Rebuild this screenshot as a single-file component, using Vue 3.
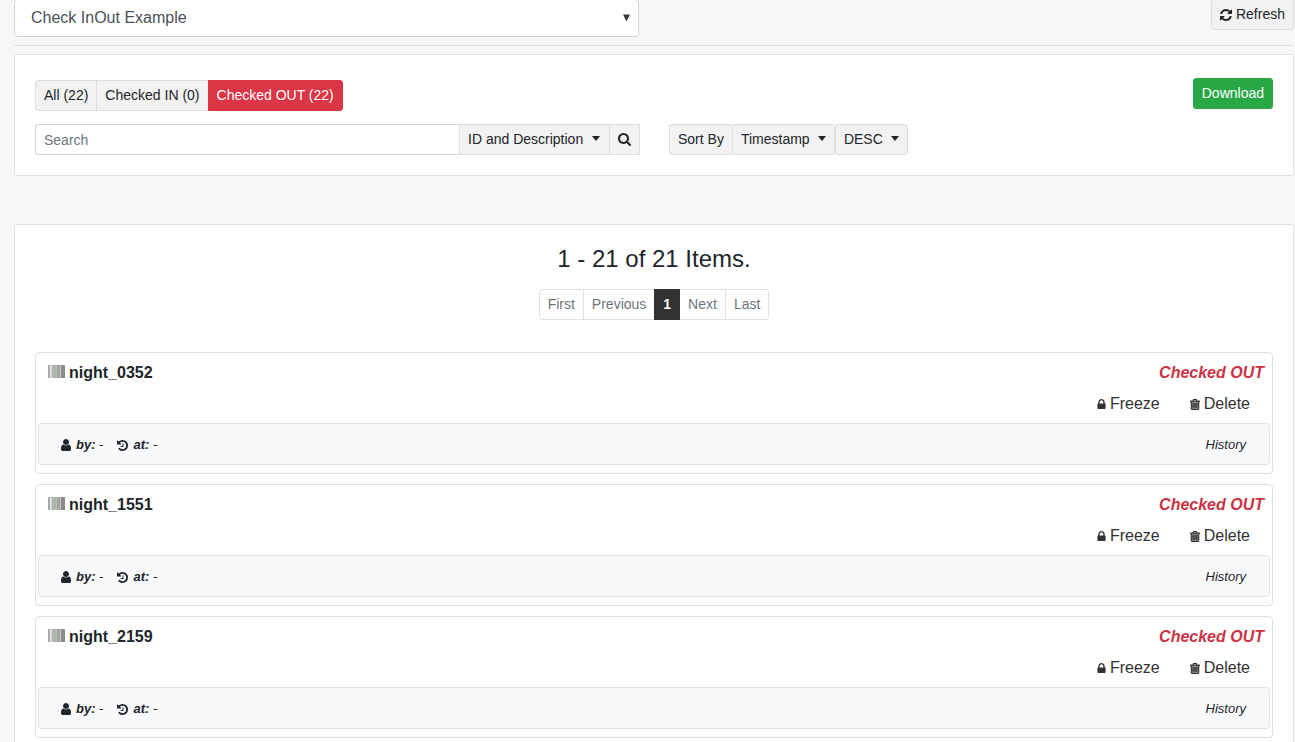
<script setup>
import { ref } from 'vue'

const icons = {
  refresh: {
    box: '128 128 1536 1536',
    d: 'M1639 1056q0 5-1 7-64 268-268 434.5t-478 166.5q-146 0-282.5-55t-243.5-157l-129 129q-19 19-45 19t-45-19-19-45v-448q0-26 19-45t45-19h448q26 0 45 19t19 45-19 45l-137 137q71 66 161 102t187 36q134 0 250-65t186-179q11-17 53-117 8-23 30-23h192q13 0 22.5 9.5t9.5 22.5zm25-800v448q0 26-19 45t-45 19h-448q-26 0-45-19t-19-45 19-45l138-138q-148-137-349-137-134 0-250 65t-186 179q-11 17-53 117-8 23-30 23h-199q-13 0-22.5-9.5t-9.5-22.5v-7q65-268 270-434.5t480-166.5q146 0 284 55.5t245 156.5l130-129q19-19 45-19t45 19 19 45z'
  },
  search: {
    box: '64 128 1664 1664',
    d: 'M1216 832q0-185-131.5-316.5t-316.5-131.5-316.5 131.5-131.5 316.5 131.5 316.5 316.5 131.5 316.5-131.5 131.5-316.5zm512 832q0 52-38 90t-90 38q-54 0-90-38l-343-342q-179 124-399 124-143 0-273.5-55.5t-225-150-150-225-55.5-273.5 55.5-273.5 150-225 225-150 273.5-55.5 273.5 55.5 225 150 150 225 55.5 273.5q0 220-124 399l343 343q37 37 37 90z'
  },
  lock: {
    box: '320 128 1152 1408',
    d: 'M640 768h512v-192q0-106-75-181t-181-75-181 75-75 181v192zm832 96v576q0 40-28 68t-68 28h-960q-40 0-68-28t-28-68v-576q0-40 28-68t68-28h32v-192q0-184 132-316t316-132 316 132 132 316v192h32q40 0 68 28t28 68z'
  },
  trash: {
    box: '192 128 1408 1536',
    d: 'M704 736v576q0 14-9 23t-23 9h-64q-14 0-23-9t-9-23v-576q0-14 9-23t23-9h64q14 0 23 9t9 23zm256 0v576q0 14-9 23t-23 9h-64q-14 0-23-9t-9-23v-576q0-14 9-23t23-9h64q14 0 23 9t9 23zm256 0v576q0 14-9 23t-23 9h-64q-14 0-23-9t-9-23v-576q0-14 9-23t23-9h64q14 0 23 9t9 23zm128 724v-948h-896v948q0 22 7 40.5t14.5 27 10.5 8.5h832q3 0 10.5-8.5t14.5-27 7-40.5zm-672-1076h448l-48-117q-7-9-17-11h-317q-10 2-17 11zm928 32v64q0 14-9 23t-23 9h-96v948q0 83-47 143.5t-113 60.5h-832q-66 0-113-58.5t-47-141.5v-952h-96q-14 0-23-9t-9-23v-64q0-14 9-23t23-9h309l70-167q15-37 54-63t79-26h320q40 0 79 26t54 63l70 167h309q14 0 23 9t9 23z'
  },
  history: {
    box: '128 128 1536 1536',
    d: 'M1664 896q0 156-61 298t-164 245-245 164-298 61q-172 0-327-72.5t-264-204.5q-7-10-6.5-22.5t8.5-20.5l137-138q10-9 25-9 16 2 23 12 73 95 179 147t225 52q104 0 198.5-40.5t163.5-109.5 109.5-163.5 40.5-198.5-40.5-198.5-109.5-163.5-163.5-109.5-198.5-40.5q-98 0-188 35.5t-160 101.5l137 138q31 30 14 69-17 40-59 40h-448q-26 0-45-19t-19-45v-448q0-42 40-59 39-17 69 14l130 129q107-101 244.5-156.5t284.5-55.5q156 0 298 61t245 164 164 245 61 298zm-640-288v448q0 14-9 23t-23 9h-320q-14 0-23-9t-9-23v-64q0-14 9-23t23-9h224v-352q0-14 9-23t23-9h64q14 0 23 9t9 23z'
  },
  user: {
    box: '256 128 1280 1536',
    d: 'M1536 1399q0 109-62.5 187t-150.5 78h-854q-88 0-150.5-78t-62.5-187q0-85 8.5-160.5t31.5-152 58.5-131 94-89 134.5-34.5q131 128 313 128t313-128q76 0 134.5 34.5t94 89 58.5 131 31.5 152 8.5 160.5zm-256-887q0 159-112.5 271.5t-271.5 112.5-271.5-112.5-112.5-271.5 112.5-271.5 271.5-112.5 271.5 112.5 112.5 271.5z'
  }
}

const tabs = ['All (22)', 'Checked IN (0)', 'Checked OUT (22)']
const activeTab = ref('Checked OUT (22)')
const pages = ['First', 'Previous', '1', 'Next', 'Last']
const items = ['night_0352', 'night_1551', 'night_2159']
const query = ref('')
</script>

<template>
  <main class="page">
    <header class="topbar">
      <label class="picker">
        <select aria-label="Database">
          <option>Check InOut Example</option>
        </select>
        <svg class="picker-arrow" viewBox="0 0 8 8" aria-hidden="true"><path d="M0 0h8L4 8z" /></svg>
      </label>
      <button type="button" class="btn refresh">
        <svg class="icon-12" :viewBox="icons.refresh.box" aria-hidden="true"><path :d="icons.refresh.d" /></svg>
        Refresh
      </button>
    </header>
    <hr />

    <section class="card filters">
      <div class="filter-row">
        <div class="group tabs">
          <button
            v-for="tab in tabs"
            :key="tab"
            type="button"
            class="btn"
            :class="{ danger: tab === activeTab }"
            @click="activeTab = tab"
          >{{ tab }}</button>
        </div>
        <button type="button" class="btn success">Download</button>
      </div>
      <div class="search-row">
        <form class="search" @submit.prevent>
          <input v-model="query" type="text" placeholder="Search" aria-label="Search" />
          <label class="dropdown square">
            <select class="btn" aria-label="Search in"><option>ID and Description</option></select>
            <span class="caret"></span>
          </label>
          <button type="submit" class="btn search-btn" aria-label="Run search">
            <svg class="icon-13" :viewBox="icons.search.box" aria-hidden="true"><path :d="icons.search.d" /></svg>
          </button>
        </form>
        <div class="sort">
          <span class="btn sort-label">Sort By</span>
          <label class="dropdown">
            <select class="btn" aria-label="Sort field"><option>Timestamp</option></select>
            <span class="caret"></span>
          </label>
          <label class="dropdown">
            <select class="btn" aria-label="Sort direction"><option>DESC</option></select>
            <span class="caret"></span>
          </label>
        </div>
      </div>
    </section>

    <section class="card list">
      <h1>1 - 21 of 21 Items.</h1>
      <nav class="pagination" aria-label="Pages">
        <a v-for="page in pages" :key="page" href="#" :class="{ active: page === '1' }">{{ page }}</a>
      </nav>

      <article v-for="item in items" :key="item" class="item">
        <div class="item-head">
          <h2>
            <svg class="barcode" viewBox="0 0 17 13" aria-hidden="true">
              <path fill="#d2d2d0" d="M0 0h17v13H0z" />
              <path fill="#aaa9a5" d="M0 0h2v13H0z" />
              <path fill="#e8e8e6" d="M2 0h1v13H2z" />
              <path fill="#aeb5b5" d="M4 0h4v13H4z" />
              <path fill="#c9b899" d="M8 0h1v13H8z" />
              <path fill="#a2a6a3" d="M9 0h3v13H9z" />
              <path fill="#c8c8c6" d="M12 0h1v13h-1z" />
              <path fill="#8b8b89" d="M13 0h4v13h-4z" />
            </svg>
            {{ item }}
          </h2>
          <span class="status">Checked OUT</span>
        </div>
        <div class="actions">
          <a href="#">
            <svg class="lock" :viewBox="icons.lock.box" aria-hidden="true"><path :d="icons.lock.d" /></svg>
            Freeze
          </a>
          <a href="#">
            <svg class="trash" :viewBox="icons.trash.box" aria-hidden="true">
              <path fill="#999" d="M448 512h896v1024H448z" />
              <path :d="icons.trash.d" stroke="currentColor" stroke-width="50" />
            </svg>
            Delete
          </a>
        </div>
        <footer class="item-foot">
          <span class="meta">
            <svg class="user" :viewBox="icons.user.box" aria-hidden="true"><path :d="icons.user.d" /></svg>
            <span><b>by:</b> -</span>
          </span>
          <span class="meta">
            <svg class="clock" :viewBox="icons.history.box" aria-hidden="true"><path :d="icons.history.d" /></svg>
            <span><b>at:</b> -</span>
          </span>
          <a href="#" class="history">History</a>
        </footer>
      </article>
    </section>
  </main>
</template>

<style>
body {
  margin: 0;
  background: #f7f7f7;
}
</style>

<style scoped>
* {
  box-sizing: border-box;
}
.page {
  display: flow-root;
  padding: 0 1px 24px 14px;
  font-family: "Liberation Sans", Arial, sans-serif;
  font-size: 16px;
  line-height: 24px;
  color: #212529;
}
button,
input,
select {
  margin: 0;
  font-family: inherit;
}
select {
  appearance: none;
}
a {
  color: inherit;
  text-decoration: none;
}
svg {
  display: block;
  flex: none;
  fill: currentColor;
}

/* top bar, tucked against the window's upper edge */
.topbar {
  display: flex;
  justify-content: space-between;
  align-items: flex-start;
  margin-top: -1px;
}
.picker {
  position: relative;
  width: calc(50% - 15px);
}
.picker select {
  display: block;
  width: 100%;
  height: 38px;
  padding: 0 16px 2px;
  border: 1px solid #ced4da;
  border-radius: 4px;
  background: #fff;
  color: #495057;
  font-size: 16px;
}
.picker-arrow {
  position: absolute;
  top: 15px;
  right: 9px;
  width: 7px;
  height: 8px;
  color: #343a40;
  pointer-events: none;
}
hr {
  margin: 8px 0;
  border: 0;
  border-top: 1px solid #dedede;
}

.btn {
  display: flex;
  align-items: center;
  gap: 4px;
  height: 31px;
  padding: 0 8px;
  border: 1px solid #dddddd;
  border-radius: 3px;
  background: #f2f2f2;
  color: #212529;
  font-size: 14px;
  line-height: 21px;
  white-space: nowrap;
}
.icon-12 {
  width: 12px;
  height: 12px;
}
.icon-13 {
  width: 13px;
  height: 13px;
}
.danger {
  border-color: #dc3545;
  background: #dc3545;
  color: #fff;
}
.success {
  border-color: #28a745;
  background: #28a745;
  color: #fff;
}

.card {
  border: 1px solid #dfdfdf;
  border-radius: 3px;
  background: #fff;
}
.filters {
  padding: 23px 20px 20px;
}
.filter-row {
  display: flex;
  justify-content: space-between;
  align-items: flex-start;
}
.tabs {
  display: flex;
  padding-top: 2px;
}
.tabs .btn + .btn {
  margin-left: -1px;
}
.tabs .btn:not(:last-child) {
  border-top-right-radius: 0;
  border-bottom-right-radius: 0;
}
.tabs .btn:not(:first-child) {
  border-top-left-radius: 0;
  border-bottom-left-radius: 0;
}
.search-row {
  display: flex;
  gap: 29px;
  margin-top: 13px;
}
.search {
  display: flex;
  width: calc(50% - 14px);
}
.search input {
  flex: 1;
  min-width: 0;
  height: 31px;
  padding: 0 8px;
  border: 1px solid #ced4da;
  border-right: 0;
  border-radius: 3px 0 0 3px;
  background: #fff;
  font-size: 14px;
}
.search input::placeholder {
  color: #6c757d;
  opacity: 1;
}
.dropdown {
  position: relative;
}
.dropdown .btn {
  padding-right: 24px;
}
.square .btn {
  padding-right: 25px;
  border-radius: 0;
}
.caret {
  position: absolute;
  top: 12px;
  right: 9px;
  border: 4px solid transparent;
  border-top: 5px solid #212529;
  border-bottom: 0;
  pointer-events: none;
}
.square .caret {
  right: 10px;
}
.search-btn {
  border-left: 0;
  border-radius: 0;
}
.sort {
  display: flex;
}
.sort-label {
  border-right: 0;
  border-radius: 3px 0 0 3px;
}

.list {
  margin-top: 48px;
  padding: 20px;
}
h1 {
  margin: 0 0 16px;
  font-size: 24px;
  font-weight: 400;
  line-height: 28px;
  text-align: center;
}
.pagination {
  display: flex;
  justify-content: center;
  margin-bottom: 32px;
}
.pagination a {
  padding: 4px 8px;
  border: 1px solid #dee2e6;
  color: #6c757d;
  font-size: 14px;
  line-height: 21px;
}
.pagination a + a {
  margin-left: -1px;
}
.pagination a:first-child {
  border-radius: 3px 0 0 3px;
}
.pagination a:last-child {
  border-radius: 0 3px 3px 0;
}
.pagination .active {
  z-index: 1;
  border-color: #343132;
  background: #343132;
  color: #fff;
  font-weight: 700;
}

.item {
  padding: 8px 2px;
  border: 1px solid #dfdfdf;
  border-radius: 4px;
}
.item + .item {
  margin-top: 10px;
}
.item-head {
  display: flex;
  justify-content: space-between;
  padding: 0 6px 0 10px;
}
h2 {
  display: flex;
  align-items: flex-start;
  gap: 4px;
  margin: 0;
  font-size: 16px;
  line-height: 24px;
}
.barcode {
  width: 17px;
  height: 13px;
  margin-top: 4px;
}
.status {
  color: #cb3444;
  font-style: italic;
  font-weight: 700;
}
.actions {
  display: flex;
  justify-content: flex-end;
  gap: 30px;
  padding: 7px 20px;
  color: #343132;
}
.actions a {
  display: flex;
  align-items: center;
  gap: 4px;
}
.lock {
  width: 9px;
  height: 10px;
}
.trash {
  width: 10px;
  height: 11px;
}
.item-foot {
  display: flex;
  align-items: center;
  gap: 14px;
  padding: 9px 23px 7px 22px;
  border: 1px solid #dee2e6;
  border-radius: 4px;
  background: #f8f9fa;
  font-size: 13px;
  font-style: italic;
}
.meta {
  display: flex;
  align-items: center;
  gap: 5px;
}
.user {
  width: 10px;
  height: 12px;
}
.clock {
  width: 11px;
  height: 11px;
}
.history {
  margin-left: auto;
}
</style>
